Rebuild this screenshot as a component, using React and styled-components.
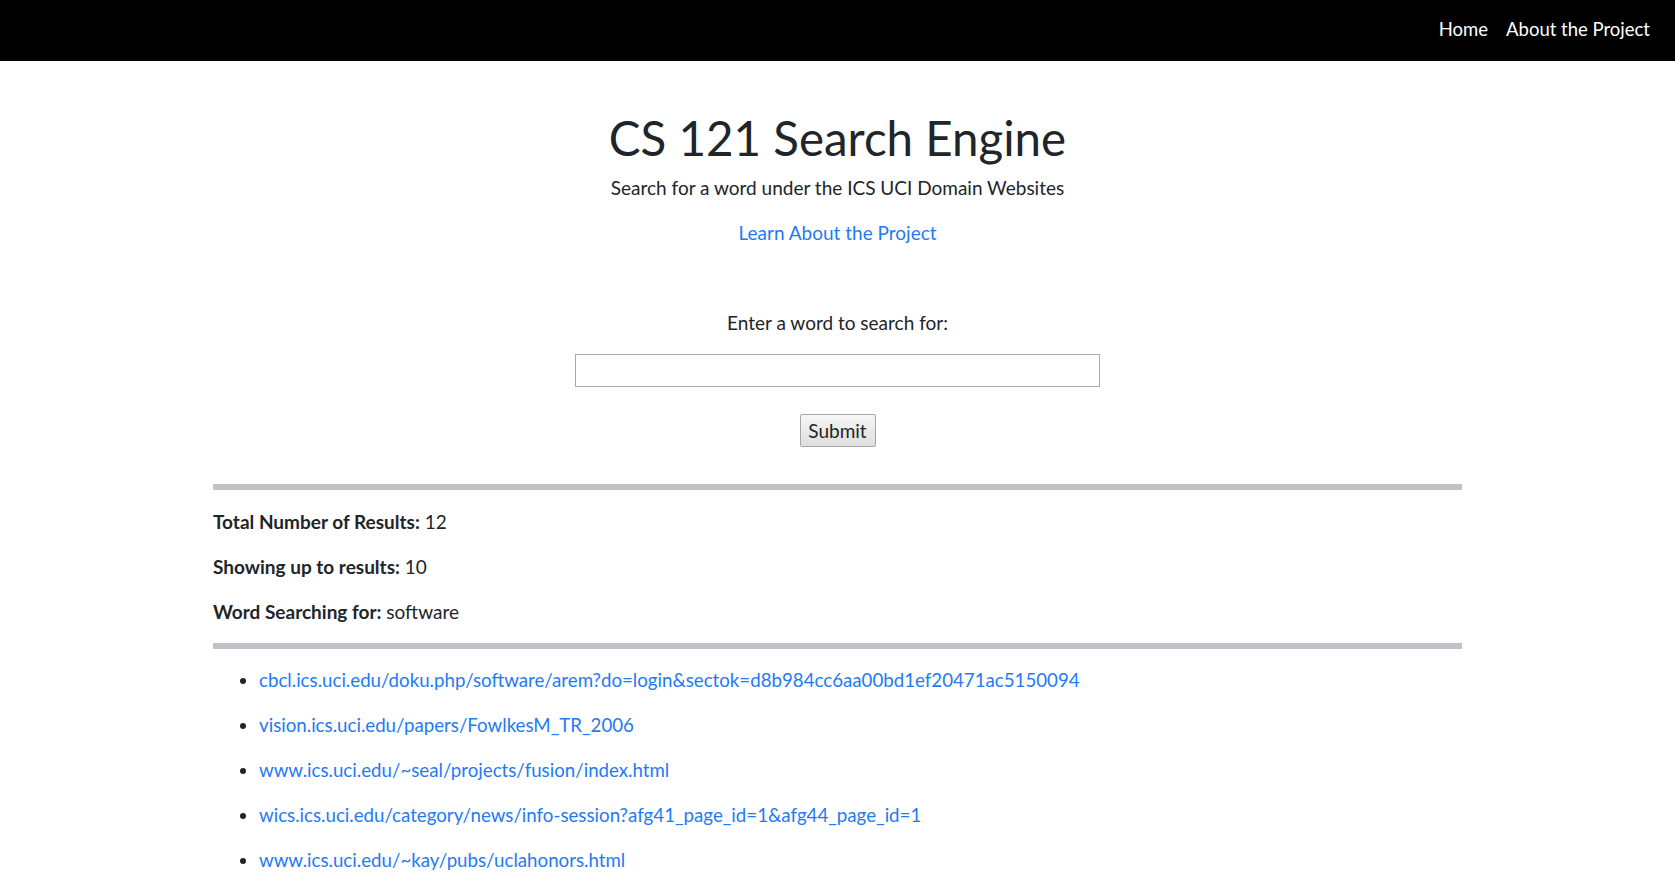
import React from "react";
import styled, { createGlobalStyle } from "styled-components";

const Global = createGlobalStyle`
  html, body { margin: 0; padding: 0; background: #fff; }
  body {
    font-family: "Lato", "Liberation Sans", sans-serif;
    color: #212529;
    font-size: 19px;
  }
  * { box-sizing: border-box; }
`;

const Nav = styled.nav`
  height: 61px;
  background: #000;
  display: flex;
  justify-content: flex-end;
  align-items: center;
  gap: 18px;
  padding: 0 25px 4px 0;
`;

const NavLink = styled.a`
  color: #fff;
  text-decoration: none;
  font-size: 18.5px;
`;

const Hero = styled.header`
  display: flex;
  flex-direction: column;
  align-items: center;
  padding-top: 48px;
`;

const Title = styled.h1`
  margin: 0;
  font-weight: 400;
  font-size: 47.5px;
  line-height: 1.2;
  color: #212529;
`;

const Subtitle = styled.p`
  margin: 8px 0 0;
  font-size: 19px;
  line-height: 28px;
`;

const BlueLink = styled.a`
  color: #1f7af5;
  text-decoration: none;
  font-size: 19px;
  line-height: 28px;
  margin-top: 17px;
`;

const Form = styled.form`
  display: flex;
  flex-direction: column;
  align-items: center;
  margin-top: 62px;
`;

const Label = styled.label`
  font-size: 19px;
  line-height: 28px;
`;

const Input = styled.input`
  margin-top: 17px;
  width: 525px;
  height: 33px;
  border: 1px solid #a9a9a9;
  border-radius: 0;
  padding: 2px 6px;
  font-size: 16px;
  background: #fff;
  outline: none;
`;

const Button = styled.button`
  margin-top: 27px;
  width: 76px;
  height: 33px;
  font-family: inherit;
  font-size: 19px;
  color: #212529;
  border: 1px solid #a6a6a6;
  border-radius: 2px;
  background: linear-gradient(#f6f6f6, #dedede);
  padding: 0;
`;

const Results = styled.section`
  width: 1249px;
  margin: 37px auto 0;
`;

const Rule = styled.hr`
  margin: 0;
  height: 6px;
  border: none;
  background: #bfc3c8;
`;

const Stats = styled.div`
  display: flex;
  flex-direction: column;
  gap: 18px;
  padding: 18px 0 18px;
`;

const Stat = styled.p`
  margin: 0;
  font-size: 19px;
  line-height: 27px;
`;

const StatLabel = styled.strong`
  font-weight: 700;
`;

const List = styled.ul`
  margin: 0;
  padding: 18px 0 0 46px;
  display: flex;
  flex-direction: column;
  gap: 18px;
`;

const Item = styled.li`
  font-size: 18.7px;
  line-height: 27px;
  color: #212529;
`;

const ResultLink = styled.a`
  color: #1f7af5;
  text-decoration: none;
`;

const urls = [
  "cbcl.ics.uci.edu/doku.php/software/arem?do=login&sectok=d8b984cc6aa00bd1ef20471ac5150094",
  "vision.ics.uci.edu/papers/FowlkesM_TR_2006",
  "www.ics.uci.edu/~seal/projects/fusion/index.html",
  "wics.ics.uci.edu/category/news/info-session?afg41_page_id=1&afg44_page_id=1",
  "www.ics.uci.edu/~kay/pubs/uclahonors.html",
];

export default function App() {
  return (
    <>
      <Global />
      <Nav>
        <NavLink href="#">Home</NavLink>
        <NavLink href="#">About the Project</NavLink>
      </Nav>
      <Hero>
        <Title>CS 121 Search Engine</Title>
        <Subtitle>Search for a word under the ICS UCI Domain Websites</Subtitle>
        <BlueLink href="#">Learn About the Project</BlueLink>
      </Hero>
      <Form onSubmit={(e) => e.preventDefault()}>
        <Label htmlFor="q">Enter a word to search for:</Label>
        <Input id="q" type="text" />
        <Button type="submit">Submit</Button>
      </Form>
      <Results>
        <Rule />
        <Stats>
          <Stat>
            <StatLabel>Total Number of Results:</StatLabel> 12
          </Stat>
          <Stat>
            <StatLabel>Showing up to results:</StatLabel> 10
          </Stat>
          <Stat>
            <StatLabel>Word Searching for:</StatLabel> software
          </Stat>
        </Stats>
        <Rule />
        <List>
          {urls.map((u) => (
            <Item key={u}>
              <ResultLink href="#">{u}</ResultLink>
            </Item>
          ))}
        </List>
      </Results>
    </>
  );
}
